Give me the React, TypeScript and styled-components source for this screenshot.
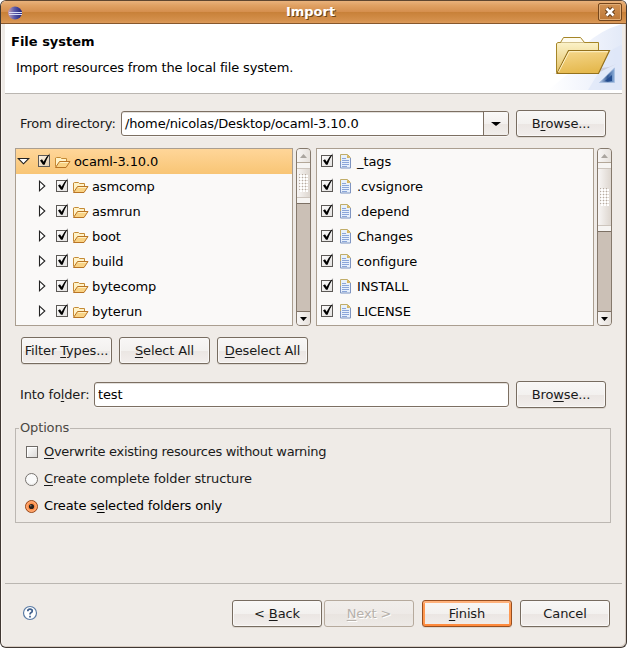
import React from "react";
import styled, { createGlobalStyle, css } from "styled-components";

const Global = createGlobalStyle`
  *, *::before, *::after { box-sizing: border-box; }
  html, body { margin: 0; background: #fff; }
  body { font: 13px/16px "DejaVu Sans", sans-serif; letter-spacing: -0.15px; color: #1a1a1a; overflow: hidden; }
`;

const Dialog = styled.main`
  width: 627px;
  height: 648px;
  display: flex;
  flex-direction: column;
  background: #efebe7;
  border: 1px solid #3f3732;
  border-top-color: #5f4630;
  border-radius: 6px;
  box-shadow: inset 1px 0 #fbf6f2, inset -1px -1px #d5cac1;
  overflow: hidden;
`;

const TitleBar = styled.header`
  flex: none;
  height: 23px;
  display: grid;
  grid-template-columns: 24px 1fr 30px;
  align-items: center;
  background: linear-gradient(#e9b27c 0, #e0a163 20%, #d6904f 48%, #c88139 52%, #d4904c 88%, #dc9a5a 100%);
  border-bottom: 1px solid #86572c;
`;

const Title = styled.h1`
  margin: 0;
  text-align: center;
  font-size: 13px;
  line-height: 20px;
  letter-spacing: 0;
  color: #fff;
  text-shadow: 1px 1px #6d4318;
`;

const AppIcon = styled.svg`
  margin: 1px 0 0 6px;
  display: block;
`;

const CloseButton = styled.button`
  width: 24px;
  height: 18px;
  padding: 0;
  margin: 0 0 0 2px;
  border: 1px solid #75461c;
  border-radius: 2px;
  background: linear-gradient(#d29253, #bd7836);
  box-shadow: inset 0 0 0 1px #e0ac76;
  display: grid;
  place-items: center;
`;

const Banner = styled.section`
  flex: none;
  height: 70px;
  margin: 0 4px;
  display: flex;
  justify-content: space-between;
  background: #fff;
  border-bottom: 1px solid #bab6b1;
`;

const BannerText = styled.div`
  padding: 9px 0 0 6px;
  color: #000;
`;

const BannerTitle = styled.h2`
  margin: 0;
  font-size: 13px;
  line-height: 17px;
  letter-spacing: 0;
`;

const BannerNote = styled.p`
  margin: 10px 0 0 5px;
`;

const Body = styled.section`
  flex: 1;
  padding: 16px 15px 0 14px;
`;

const FieldRow = styled.div<{ $label: number }>`
  height: 27px;
  display: grid;
  grid-template-columns: ${(p) => p.$label}px 1fr 90px;
  align-items: center;
  padding-left: 5px;
  margin-right: 5px;
`;

const FieldBox = styled.div`
  height: 25px;
  margin-right: 7px;
  display: flex;
  align-items: center;
  justify-content: space-between;
  padding-left: 3px;
  border: 1px solid #7c6f62;
  border-radius: 3px;
  background: #fff;
  box-shadow: inset 0 1px #e3e0dc, 0 1px #f8f6f4;
  color: #000;
  overflow: hidden;
`;

const DropButton = styled.span`
  width: 25px;
  height: 23px;
  display: grid;
  place-items: center;
  border-left: 1px solid #7c6f62;
  background: linear-gradient(#faf9f8, #f3f0ee 50%, #ebe6e2 52%, #f1eeeb);
`;

const Key = styled.span`
  text-decoration: underline;
  text-decoration-thickness: 1px;
  text-underline-offset: 2px;
  text-decoration-skip-ink: none;
`;

const Button = styled.button<{ $primary?: boolean; $w?: number }>`
  width: ${(p) => p.$w ?? 90}px;
  height: 27px;
  flex: none;
  padding: 0;
  font: inherit;
  letter-spacing: -0.12px;
  color: #1a1a1a;
  border: 1px solid #776c60;
  border-radius: 3px;
  background: linear-gradient(#f8f7f6, #f3f1ef 50%, #ebe6e3 52%, #f2eeec);
  box-shadow: inset 0 0 0 1px #faf8f7, 0 1px #dcd6d0;

  ${(p) => p.$primary && css`
    border-color: #994e1e;
    box-shadow: inset 0 2px #ffb27c, inset 0 -2px #ff8b3e, inset 2px 0 #ff9850, inset -2px 0 #ff9850, 0 1px #dcd6d0;
  `}

  &:disabled {
    color: #b7b1ab;
    text-shadow: 1px 1px #fff;
    border-color: #b6aa9d;
    background: linear-gradient(#f1eeeb, #eeeae7 50%, #e9e4e0 52%, #eeeae7);
    box-shadow: none;
  }
`;

const PaneRow = styled.div`
  display: flex;
  gap: 5px;
  margin-top: 11px;
  height: 178px;
`;

const PaneGroup = styled.div`
  display: flex;
  gap: 3px;
`;

const List = styled.div`
  width: 278px;
  border: 1px solid #aa9e90;
  background: #faf9f8;
  color: #000;
  letter-spacing: -0.1px;
`;

const Row = styled.div<{ $selected?: boolean; $indent?: number }>`
  height: 25px;
  display: flex;
  align-items: center;
  padding-left: ${(p) => p.$indent ?? 1}px;
  background: ${(p) => (p.$selected ? "linear-gradient(#ffd699, #f8c575)" : "transparent")};

  > svg { flex: none; }
`;

const TreeToggle = styled.span`
  width: 21px;
  height: 13px;
  flex: none;
  display: flex;
`;

const RowCheck = styled.span`
  width: 14px;
  height: 16px;
  flex: none;
  display: flex;
  margin: 0 3px 3px 0;
`;

const RowText = styled.span<{ $gap?: number }>`
  margin-left: ${(p) => p.$gap ?? 3}px;
`;

const Bar = styled.div`
  width: 15px;
  height: 178px;
  display: flex;
  flex-direction: column;
  border: 1px solid #85796c;
  border-radius: 4px;
  background: #cbc0b6;
  overflow: hidden;
`;

const BarEnd = styled.div<{ $up?: boolean }>`
  height: 14px;
  flex: none;
  display: grid;
  place-items: center;
  background: linear-gradient(90deg, #f8f6f5, #e6e1dc);
  border-bottom: ${(p) => (p.$up ? "1px solid #b3a798" : "0")};
  border-top: ${(p) => (p.$up ? "0" : "1px solid #7c7064")};
  margin-top: ${(p) => (p.$up ? "0" : "auto")};
`;

const Thumb = styled.div<{ $h: number }>`
  flex: none;
  height: ${(p) => p.$h}px;
  display: grid;
  place-items: center;
  background:
    linear-gradient(#f6f4f2, #f6f4f2) 0 0 / 100% 5px no-repeat,
    linear-gradient(#f6f4f2, #f6f4f2) 0 100% / 100% 5px no-repeat,
    linear-gradient(90deg, #f8f6f5, #ddd6cf);
  border-bottom: 1px solid #7c7064;
`;

const Grip = styled.div<{ $h: number }>`
  width: 13px;
  height: ${(p) => p.$h}px;
  display: grid;
  place-items: center;
  border-top: 1px solid #cdc5bd;
  border-bottom: 1px solid #cdc5bd;
`;

const SelectButtons = styled.div`
  display: flex;
  gap: 7px;
  padding-left: 6px;
  margin: 11px 0 17px;
`;

const Options = styled.fieldset`
  width: 596px;
  height: 103px;
  margin: 12px 0 0;
  padding: 2px 0 0 9px;
  border: 1px solid #bcb7b2;
`;

const Legend = styled.legend`
  margin-left: -6px;
  padding: 0 1px;
  color: #4b4844;
`;

const Choice = styled.label<{ $on?: boolean; $tracking?: number }>`
  display: flex;
  align-items: center;
  gap: 5px;
  height: 27px;
  letter-spacing: ${(p) => p.$tracking ?? -0.16}px;
  color: ${(p) => (p.$on ? "#000" : "#1a1a1a")};
`;

const Footer = styled.footer`
  flex: none;
  height: 64px;
  margin: 0 4px;
  display: flex;
  align-items: flex-start;
  padding: 16px 12px 0 17px;
  border-top: 1px solid #bab6b1;
`;

const FooterButtons = styled.div`
  margin-left: auto;
  display: flex;
  gap: 8px;
`;

const Pager = styled.div`
  display: flex;
  gap: 2px;
`;

const HelpIcon = styled.svg`
  margin-top: 5px;
`;

const CheckBox = () => (
  <svg width="14" height="16" viewBox="0 0 14 16">
    <defs>
      <linearGradient id="tick-box" x1="0" y1="0" x2="1" y2="1">
        <stop offset="0" stopColor="#fff" stopOpacity=".75" />
        <stop offset="1" stopColor="#d4d2d0" stopOpacity=".6" />
      </linearGradient>
    </defs>
    <rect x=".5" y="3.5" width="11" height="11" fill="url(#tick-box)" stroke="#5c5956" />
    <path d="M2 8.4L4 7.2L5.6 9.8Q8 4.5 12.2 1.2Q8.8 6.5 6.6 12.7H5Z" fill="#000" />
  </svg>
);

const EmptyBox = () => (
  <svg width="14" height="15" viewBox="0 0 14 15">
    <defs>
      <linearGradient id="empty-box" x1="0" y1="0" x2="1" y2="1">
        <stop offset="0" stopColor="#fff" />
        <stop offset="1" stopColor="#dad8d6" />
      </linearGradient>
    </defs>
    <rect x="1.5" y="2.5" width="11" height="11" fill="url(#empty-box)" stroke="#6f6b67" />
    <path d="M2.5 13V3.5H12" fill="none" stroke="#fff" />
  </svg>
);

const Radio = ({ on }: { on?: boolean }) => (
  <svg width="14" height="14" viewBox="0 0 14 14">
    <circle cx="6.5" cy="7.5" r="6" fill={on ? "#ff8f49" : "#fafafa"} stroke={on ? "#954b20" : "#77736f"} />
    {on ? (
      <>
        <circle cx="6.5" cy="7.5" r="4.7" fill="none" stroke="#ffb788" />
        <circle cx="6.5" cy="7.5" r="2.6" fill="#2b211b" />
        <circle cx="5.8" cy="6.7" r="0.8" fill="#8a8179" />
      </>
    ) : (
      <path d="M2.5 10.5a5 5 0 0 0 8 0" fill="none" stroke="#e3e2e0" />
    )}
  </svg>
);

const FolderIcon = () => (
  <svg width="16" height="16" viewBox="0 0 16 16">
    <path d="M.5 12.5V4L1.5 3.5H5.5L6.5 4.5H11.5V7.5" fill="#fff3c9" stroke="#c58a35" />
    <path d="M.5 13.5L4.5 7.5H15L11 13.5Z" fill="#f9d384" stroke="#b97424" />
    <path d="M5.2 8.5H13.3" stroke="#fff0c4" />
  </svg>
);

const FileIcon = () => (
  <svg width="12" height="15" viewBox="0 0 12 15">
    <path d="M.5 14.5V.5H7.5L10.5 3.5V14.5Z" fill="#e8f1fc" />
    <path d="M.5 8V.5H7.5L10.5 3.5" fill="none" stroke="#c1ad68" />
    <path d="M.5 7V14H10.5V4" fill="none" stroke="#7f94c0" />
    <path d="M7 .5V4H10.5Z" fill="#d6b660" />
    <path d="M2 4.5H6M2 6.5H9M2 8.5H9M2 10.5H9M2 12.5H7" stroke="#8ba6d9" />
  </svg>
);

const Expander = ({ open }: { open?: boolean }) => (
  <svg width="13" height="13" viewBox="0 0 13 13">
    <path
      d={open ? "M1.2 3.5H11.8L6.5 8.8Z" : "M4.5 1.2V10.8L9.8 6Z"}
      fill="#fff"
      stroke="#222"
      strokeWidth="1.1"
    />
  </svg>
);

const Arrow = ({ up, w = 7 }: { up?: boolean; w?: number }) => (
  <svg width={w} height="4" viewBox="0 0 8 4" preserveAspectRatio="none">
    <path d={up ? "M0 4L4 0L8 4Z" : "M0 0H8L4 4Z"} fill={up ? "#aaa59f" : "#000"} />
  </svg>
);

const Dots = () => (
  <svg width="9" height="18" viewBox="0 0 9 18">
    {[0, 3, 6, 9, 12, 15].map((y) =>
      [0, 3, 6].map((x) => (
        <g key={`${x}-${y}`}>
          <rect x={x + 1} y={y + 1} width="2" height="2" fill="#fff" />
          <rect x={x} y={y} width="1" height="1" fill="#b5aba1" />
        </g>
      ))
    )}
  </svg>
);

const ScrollBar = ({ thumb }: { thumb: number }) => (
  <Bar>
    <BarEnd $up><Arrow up /></BarEnd>
    <Thumb $h={thumb}><Grip $h={thumb - 11}><Dots /></Grip></Thumb>
    <BarEnd><Arrow /></BarEnd>
  </Bar>
);

const BannerArt = () => (
  <svg width="76" height="69" viewBox="0 0 76 69">
    <defs>
      <linearGradient id="glow" x1="0" y1="0" x2="1" y2="0">
        <stop offset="0" stopColor="#fff" />
        <stop offset=".55" stopColor="#f1f4fc" />
        <stop offset="1" stopColor="#e3eaf8" />
      </linearGradient>
      <linearGradient id="back" x1="0" y1="0" x2="0" y2="1">
        <stop offset="0" stopColor="#fbf2c8" />
        <stop offset="1" stopColor="#e4c268" />
      </linearGradient>
      <linearGradient id="front" x1="0" y1="0" x2="0.3" y2="1">
        <stop offset="0" stopColor="#f6d88e" />
        <stop offset="1" stopColor="#e5b94f" />
      </linearGradient>
      <linearGradient id="tri" x1="0" y1="0" x2="1" y2="0">
        <stop offset="0" stopColor="#bdd0ea" />
        <stop offset=".55" stopColor="#325893" />
        <stop offset="1" stopColor="#8db0dc" />
      </linearGradient>
    </defs>
    <path d="M76 0Q55 6 40 20L22 50L2 66H76Z" fill="url(#glow)" />
    <path d="M76 21Q57 27 53 48L42 66H76Z" fill="#dce5f7" opacity=".65" />
    <path d="M6 50L15 49L63 43L70 40L50 50Z" fill="#a9a4b4" opacity=".4" />
    <path d="M10.5 48.5V19.5L12 18.5H52.5V27L47 48Z" fill="url(#back)" stroke="#a58527" />
    <path d="M14.5 18.5L17.5 13.5H34.5L38.5 18.5" fill="#fffcef" stroke="#a58527" />
    <path d="M11 49.5L22.5 26.5H63.5L52.5 49.5Z" fill="url(#front)" stroke="#94711c" strokeWidth="1.2" />
    <path d="M12.5 48L23.2 27.7H62" fill="none" stroke="#fff3c9" />
    <path d="M53.5 58.5L68.5 44V58.5Z" fill="url(#tri)" stroke="#a8bfdf" strokeWidth=".8" />
    <path d="M59 57L66 51V57Z" fill="#234d90" />
  </svg>
);

const folders = ["asmcomp", "asmrun", "boot", "build", "bytecomp", "byterun"];
const files = ["_tags", ".cvsignore", ".depend", "Changes", "configure", "INSTALL", "LICENSE"];

export default function App() {
  return (
    <>
      <Global />
      <Dialog>
        <TitleBar>
          <AppIcon width="16" height="14" viewBox="0 0 16 14">
            <defs>
              <linearGradient id="ball" x1="0" y1="0" x2="1" y2="0">
                <stop offset="0" stopColor="#cb9eaf" />
                <stop offset=".45" stopColor="#5b5caa" />
                <stop offset="1" stopColor="#21227a" />
              </linearGradient>
            </defs>
            <ellipse cx="8" cy="7" rx="7" ry="6.4" fill="url(#ball)" />
            <path d="M2 6.5H15M2 8.5H15" stroke="#d9def5" />
          </AppIcon>
          <Title>Import</Title>
          <CloseButton aria-label="Close">
            <svg width="12" height="12" viewBox="0 0 12 12">
              <path d="M2.5 2.5L9.5 9.5M9.5 2.5L2.5 9.5" stroke="#68401b" strokeWidth="4.6" />
              <path d="M2.5 2.5L9.5 9.5M9.5 2.5L2.5 9.5" stroke="#fff" strokeWidth="2.5" />
            </svg>
          </CloseButton>
        </TitleBar>

        <Banner>
          <BannerText>
            <BannerTitle>File system</BannerTitle>
            <BannerNote>Import resources from the local file system.</BannerNote>
          </BannerText>
          <BannerArt />
        </Banner>

        <Body>
          <FieldRow $label={101}>
            <span>From directory:</span>
            <FieldBox>
              /home/nicolas/Desktop/ocaml-3.10.0
              <DropButton><Arrow w={10} /></DropButton>
            </FieldBox>
            <Button>B<Key>r</Key>owse...</Button>
          </FieldRow>

          <PaneRow>
            <PaneGroup>
              <List>
                <Row $selected>
                  <TreeToggle><Expander open /></TreeToggle>
                  <RowCheck><CheckBox /></RowCheck>
                  <FolderIcon />
                  <RowText>ocaml-3.10.0</RowText>
                </Row>
                {folders.map((name) => (
                  <Row key={name} $indent={19}>
                    <TreeToggle><Expander /></TreeToggle>
                    <RowCheck><CheckBox /></RowCheck>
                    <FolderIcon />
                    <RowText>{name}</RowText>
                  </Row>
                ))}
              </List>
              <ScrollBar thumb={41} />
            </PaneGroup>
            <PaneGroup>
              <List>
                {files.map((name) => (
                  <Row key={name} $indent={4}>
                    <RowCheck><CheckBox /></RowCheck>
                    <RowText $gap={2} />
                    <FileIcon />
                    <RowText $gap={5}>{name}</RowText>
                  </Row>
                ))}
              </List>
              <ScrollBar thumb={69} />
            </PaneGroup>
          </PaneRow>

          <SelectButtons>
            <Button $w={91}>Filter <Key>T</Key>ypes...</Button>
            <Button $w={91}><Key>S</Key>elect All</Button>
            <Button $w={91}><Key>D</Key>eselect All</Button>
          </SelectButtons>

          <FieldRow $label={74}>
            <span>Into fo<Key>l</Key>der:</span>
            <FieldBox>test</FieldBox>
            <Button>Bro<Key>w</Key>se...</Button>
          </FieldRow>

          <Options>
            <Legend>Options</Legend>
            <Choice $tracking={-0.3}>
              <EmptyBox />
              <span><Key>O</Key>verwrite existing resources without warning</span>
            </Choice>
            <Choice>
              <Radio />
              <span><Key>C</Key>reate complete folder structure</span>
            </Choice>
            <Choice $on>
              <Radio on />
              <span>Create s<Key>e</Key>lected folders only</span>
            </Choice>
          </Options>
        </Body>

        <Footer>
          <HelpIcon width="16" height="16" viewBox="0 0 16 16">
            <circle cx="8" cy="8" r="6.5" fill="#fff" stroke="#5a7ba5" strokeWidth="1.2" />
            <path d="M5.8 6.2Q5.8 4.2 8 4.2Q10.3 4.2 10.3 6Q10.3 7.2 8.9 7.8Q8 8.3 8 9.6M8 10.8V12.4" fill="none" stroke="#3f5f8c" strokeWidth="1.7" />
          </HelpIcon>
          <FooterButtons>
            <Pager>
              <Button>&lt; <Key>B</Key>ack</Button>
              <Button disabled><Key>N</Key>ext &gt;</Button>
            </Pager>
            <Button $primary><Key>F</Key>inish</Button>
            <Button>Cancel</Button>
          </FooterButtons>
        </Footer>
      </Dialog>
    </>
  );
}
